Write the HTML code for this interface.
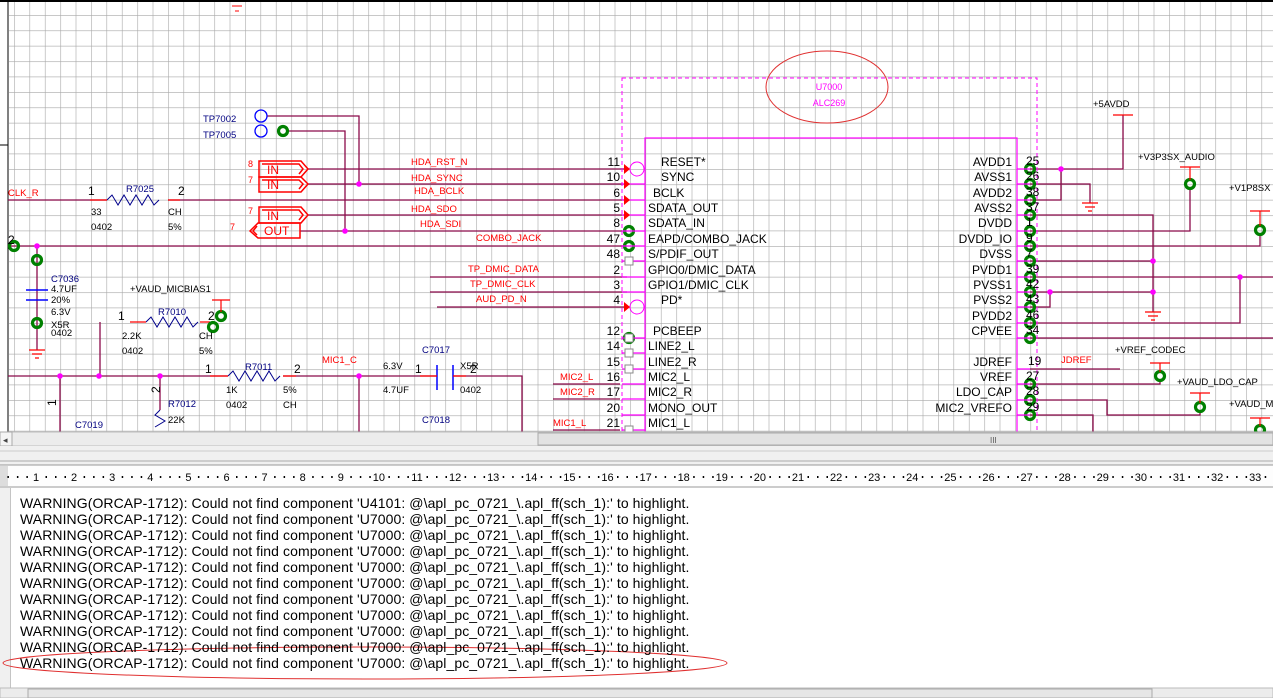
<!DOCTYPE html>
<html><head><meta charset="utf-8"><style>
html,body{margin:0;padding:0;width:1273px;height:698px;overflow:hidden;background:#fff;font-family:"Liberation Sans",Arial,sans-serif}
#sch{position:absolute;left:0;top:0}
.msg{position:absolute;left:20px;font-size:14px;color:#000;white-space:nowrap;line-height:16px;letter-spacing:0.08px}
</style></head><body>
<svg id="sch" width="1273" height="698" viewBox="0 0 1273 698" font-family="Liberation Sans, Arial, sans-serif">
<defs>
<pattern id="g" x="14.1" y="15" width="15.4" height="15.4" patternUnits="userSpaceOnUse">
<path d="M0 0V15.4M0 0H15.4" stroke="#a8a8a8" stroke-width="1.2" fill="none"/>
</pattern>
</defs>
<rect x="0" y="0" width="1273" height="432" fill="#fff"/>
<rect x="9" y="2" width="1264" height="430" fill="url(#g)"/>
<line x1="0" y1="1" x2="1273" y2="1" stroke="#000" stroke-width="2"/>
<line x1="8" y1="0" x2="8" y2="432" stroke="#000"/>
<line x1="0" y1="145" x2="8" y2="145" stroke="#000"/>
<g stroke="#f00"><line x1="232" y1="6" x2="242" y2="6"/><line x1="235" y1="11" x2="239" y2="11"/></g>

<g stroke="#8b0a4a" stroke-width="1.3" fill="none">
<path d="M267 116H359V184"/><path d="M289 131H345V231"/>
<path d="M308 169H627M308 184H627M8 200H107M168 200H627M308 215H627M300 231H627M8 246H627"/>
<path d="M430 277H627M430 292H627M437 307H627"/>
<path d="M37 246V350M100 322V376M8 376H228M283 376H437M453 376H522V432M60 376V432M359 376V432M160 376V410"/>
<path d="M1030 169H1123V115M1061 169V200H1030M1030 184H1090V203M1030 215H1153V312M1030 231H1190V190M1030 246H1260V236M1030 261H1153M1030 277H1273M1030 292H1153M1050 292V307H1030M1030 323H1240V277M1030 338H1273"/>
<path d="M1030 369H1120M1030 384H1160V382M1030 400H1107V415H1200V413M1030 415H1093V432"/>
<path d="M553 384H620M553 399H620M553 430H620"/>
</g>
<g fill="#f0f">
<circle cx="359" cy="184" r="2.8"/><circle cx="345" cy="231" r="2.8"/><circle cx="37" cy="246" r="2.8"/>
<circle cx="60" cy="376" r="2.8"/><circle cx="99" cy="376" r="2.8"/><circle cx="160" cy="376" r="2.8"/><circle cx="359" cy="376" r="2.8"/>
<circle cx="1061" cy="169" r="2.8"/><circle cx="1153" cy="261" r="2.8"/><circle cx="1153" cy="292" r="2.8"/><circle cx="1050" cy="292" r="2.8"/><circle cx="1240" cy="277" r="2.8"/>
</g>
<g stroke="#00008b" stroke-width="1" fill="none">
<path d="M107 200l5-5 6 10 6-10 6 10 6-10 6 10 6-10 6 10 5-5"/>
<path d="M146 322l5-5 6 10 6-10 6 10 6-10 6 10 6-10 6 10 5-5"/>
<path d="M228 376l5-5 6 10 6-10 6 10 6-10 6 10 6-10 6 10 5-5"/>
<path d="M160 410l-5 5 10 6-10 6"/>
<path d="M26 290H48M26 300H48M437 365V390M453 365V390" stroke="#00f" stroke-width="1.5"/>
</g>
<g stroke="#f00" stroke-width="1.3"><path d="M90 200H107M168 200H180M130 322H146M200 322H210M210 376H228M283 376H296M420 376H437M453 376H466"/></g>
<g fill="none" stroke="#00f" stroke-width="1.3"><circle cx="261" cy="116" r="6"/><circle cx="261" cy="131" r="6"/></g>
<g fill="none" stroke="#008000" stroke-width="3.2">
<circle cx="283" cy="131" r="4.5"/><circle cx="37" cy="260" r="4.5"/><circle cx="37" cy="323" r="4.5"/><circle cx="14" cy="246" r="4.5"/>
<circle cx="213" cy="327" r="4.5"/><circle cx="221" cy="316" r="4.5"/>
<circle cx="629" cy="231" r="4.5"/><circle cx="629" cy="246" r="4.5"/><circle cx="629" cy="338" r="4.5"/>
<circle cx="1030" cy="169" r="4.5"/><circle cx="1030" cy="184" r="4.5"/><circle cx="1030" cy="200" r="4.5"/><circle cx="1030" cy="215" r="4.5"/><circle cx="1030" cy="231" r="4.5"/><circle cx="1030" cy="246" r="4.5"/><circle cx="1030" cy="261" r="4.5"/><circle cx="1030" cy="277" r="4.5"/><circle cx="1030" cy="292" r="4.5"/><circle cx="1030" cy="307" r="4.5"/><circle cx="1030" cy="323" r="4.5"/><circle cx="1030" cy="338" r="4.5"/>
<circle cx="1030" cy="384" r="4.5"/><circle cx="1030" cy="400" r="4.5"/><circle cx="1030" cy="415" r="4.5"/>
<circle cx="1190" cy="184" r="4.5"/><circle cx="1260" cy="230" r="4.5"/><circle cx="1160" cy="376" r="4.5"/><circle cx="1200" cy="407" r="4.5"/><circle cx="1260" cy="430" r="4.5"/>
</g>
<g stroke="#f00" stroke-width="1.2">
<path d="M1113 115H1133M1180 167H1200M1250 211H1270M1150 363H1170M1190 393H1210M1250 418H1270M212 300H230M221 300V312"/>
<path d="M1190 167V180M1260 211V226M1160 363V372M1200 393V403M1260 418V426"/>
<path d="M1082 203H1098M1085 207H1095M1088 211H1092M1145 312H1161M1148 316H1158M1151 320H1155M29 350H45M32 354H42M35 358H39"/>
</g>
<g stroke="#f00" stroke-width="1.5" fill="none">
<path d="M259 161H301L308 169L301 177H259Z"/><path d="M262 164H299L303 169L299 174"/>
<path d="M259 177H301L308 184L301 192H259Z"/><path d="M262 180H299L303 184L299 189"/>
<path d="M259 207H301L308 215L301 223H259Z"/><path d="M262 210H299L303 215L299 220"/>
<path d="M300 223H258L250 231L258 238H300Z"/><path d="M257 226L253 231L257 235"/>
</g>
<g fill="#f00" font-size="12"><text x="267" y="174">IN</text><text x="267" y="189">IN</text><text x="267" y="220">IN</text><text x="264" y="235">OUT</text>
<g font-size="9"><text x="248" y="167">8</text><text x="248" y="183">7</text><text x="248" y="214">7</text><text x="230" y="230">7</text></g></g>

<rect x="622" y="78" width="415" height="360" fill="none" stroke="#f0f" stroke-dasharray="4,3"/>
<rect x="645" y="138" width="372" height="300" fill="none" stroke="#f0f" stroke-width="1.2"/>
<ellipse cx="827" cy="87" rx="61" ry="36" fill="none" stroke="#e03030"/>
<g fill="#f0f" font-size="9" text-anchor="middle"><text x="829" y="90">U7000</text><text x="829" y="106">ALC269</text></g>
<g stroke="#f0f" stroke-width="1.2"><path d="M622 184H645M622 200H645M622 215H645M622 231H645M622 246H645M622 261H645M622 277H645M622 292H645M622 338H645M622 353H645M622 369H645M622 384H645M622 399H645M622 415H645M622 430H645"/>
<path d="M1017 169H1030M1017 184H1030M1017 200H1030M1017 215H1030M1017 231H1030M1017 246H1030M1017 261H1030M1017 277H1030M1017 292H1030M1017 307H1030M1017 323H1030M1017 338H1030M1017 369H1030M1017 384H1030M1017 400H1030M1017 415H1030"/></g>
<g fill="none" stroke="#f0f"><circle cx="637" cy="169" r="7"/><circle cx="637" cy="307" r="7"/></g>
<g fill="#f00"><path d="M624 164l6 5-6 5z"/><path d="M624 179l6 5-6 5z"/><path d="M624 195l6 5-6 5z"/><path d="M624 210l6 5-6 5z"/><path d="M624 302l6 5-6 5z"/></g>
<g fill="#fff" stroke="#888"><rect x="625" y="257" width="8" height="8"/><rect x="625" y="334" width="8" height="8"/><rect x="625" y="349" width="8" height="8"/><rect x="625" y="365" width="8" height="8"/><rect x="625" y="426" width="8" height="8"/></g>
<g font-size="12" fill="#000">
<g text-anchor="end"><text x="620" y="166">11</text><text x="620" y="181">10</text><text x="620" y="197">6</text><text x="620" y="212">5</text><text x="620" y="227">8</text><text x="620" y="243">47</text><text x="620" y="258">48</text><text x="620" y="274">2</text><text x="620" y="289">3</text><text x="620" y="304">4</text><text x="620" y="335">12</text><text x="620" y="350">14</text><text x="620" y="366">15</text><text x="620" y="381">16</text><text x="620" y="396">17</text><text x="620" y="412">20</text><text x="620" y="427">21</text></g>
<text x="661" y="166">RESET*</text><text x="661" y="181">SYNC</text><text x="653" y="197">BCLK</text><text x="648" y="212">SDATA_OUT</text><text x="648" y="227">SDATA_IN</text><text x="648" y="243">EAPD/COMBO_JACK</text><text x="648" y="258">S/PDIF_OUT</text><text x="648" y="274">GPIO0/DMIC_DATA</text><text x="648" y="289">GPIO1/DMIC_CLK</text><text x="661" y="304">PD*</text><text x="653" y="335">PCBEEP</text><text x="648" y="350">LINE2_L</text><text x="648" y="366">LINE2_R</text><text x="648" y="381">MIC2_L</text><text x="648" y="396">MIC2_R</text><text x="648" y="412">MONO_OUT</text><text x="648" y="427">MIC1_L</text>
<g text-anchor="end"><text x="1012" y="166">AVDD1</text><text x="1012" y="181">AVSS1</text><text x="1012" y="197">AVDD2</text><text x="1012" y="212">AVSS2</text><text x="1012" y="227">DVDD</text><text x="1012" y="243">DVDD_IO</text><text x="1012" y="258">DVSS</text><text x="1012" y="274">PVDD1</text><text x="1012" y="289">PVSS1</text><text x="1012" y="304">PVSS2</text><text x="1012" y="320">PVDD2</text><text x="1012" y="335">CPVEE</text><text x="1012" y="366">JDREF</text><text x="1012" y="381">VREF</text><text x="1012" y="396">LDO_CAP</text><text x="1012" y="412">MIC2_VREFO</text></g>
<text x="1026" y="165">25</text><text x="1026" y="180">26</text><text x="1026" y="196">38</text><text x="1026" y="211">37</text><text x="1026" y="226">1</text><text x="1026" y="242">9</text><text x="1026" y="257">7</text><text x="1026" y="273">39</text><text x="1026" y="288">42</text><text x="1026" y="303">43</text><text x="1026" y="319">46</text><text x="1026" y="334">34</text><text x="1028" y="365">19</text><text x="1026" y="380">27</text><text x="1026" y="395">28</text><text x="1026" y="411">29</text>
</g>
<g fill="#f00" font-size="9.5">
<text x="411" y="165">HDA_RST_N</text><text x="411" y="181">HDA_SYNC</text><text x="414" y="194">HDA_BCLK</text><text x="411" y="212">HDA_SDO</text><text x="420" y="227">HDA_SDI</text><text x="476" y="241">COMBO_JACK</text>
<text x="468" y="272">TP_DMIC_DATA</text><text x="470" y="287">TP_DMIC_CLK</text><text x="476" y="302">AUD_PD_N</text>
<text x="560" y="380">MIC2_L</text><text x="560" y="395">MIC2_R</text><text x="553" y="426">MIC1_L</text>
<text x="8" y="196">CLK_R</text><text x="322" y="363">MIC1_C</text><text x="1061" y="363">JDREF</text>
</g>
<g fill="#000080" font-size="9.5"><text x="203" y="122">TP7002</text><text x="203" y="138">TP7005</text><text x="126" y="192">R7025</text><text x="51" y="282">C7036</text><text x="158" y="315">R7010</text><text x="245" y="370">R7011</text><text x="422" y="353">C7017</text><text x="168" y="407">R7012</text><text x="422" y="423">C7018</text><text x="75" y="428">C7019</text></g>
<g fill="#000" font-size="9.5">
<text x="91" y="215">33</text><text x="168" y="215">CH</text><text x="91" y="230">0402</text><text x="168" y="230">5%</text>
<text x="51" y="292">4.7UF</text><text x="51" y="303">20%</text><text x="51" y="315">6.3V</text><text x="51" y="328">X5R</text><text x="51" y="336">0402</text>
<text x="130" y="292">+VAUD_MICBIAS1</text><text x="122" y="339">2.2K</text><text x="199" y="339">CH</text><text x="122" y="354">0402</text><text x="199" y="354">5%</text>
<text x="226" y="393">1K</text><text x="226" y="408">0402</text><text x="283" y="393">5%</text><text x="283" y="408">CH</text>
<text x="383" y="369">6.3V</text><text x="460" y="369">X5R</text><text x="383" y="393">4.7UF</text><text x="460" y="393">0402</text><text x="168" y="423">22K</text>
<text x="1093" y="107">+5AVDD</text><text x="1138" y="160">+V3P3SX_AUDIO</text><text x="1229" y="191">+V1P8SX</text><text x="1115" y="353">+VREF_CODEC</text><text x="1177" y="385">+VAUD_LDO_CAP</text><text x="1229" y="407">+VAUD_M</text>
</g>
<g fill="#000" font-size="12"><text x="88" y="195">1</text><text x="178" y="195">2</text><text x="118" y="320">1</text><text x="208" y="320">2</text><text x="205" y="373">1</text><text x="294" y="373">2</text><text x="415" y="373">1</text><text x="470" y="373">2</text><text x="8" y="244">2</text>
<text x="155" y="398" transform="rotate(-90 155 393)">2</text><text x="52" y="410" transform="rotate(-90 52 406)">1</text></g>

<rect x="0" y="432" width="1273" height="14" fill="#ececec" stroke="#bbb"/>
<rect x="0" y="432" width="12" height="14" fill="#f4f4f4" stroke="#aaa"/>
<text x="3" y="443" font-size="9" fill="#444">◂</text>
<rect x="538" y="433" width="735" height="12" fill="#e2e2e2" stroke="#aaa"/>
<text x="990" y="443" font-size="8" fill="#555">III</text>
<rect x="0" y="446" width="1273" height="20" fill="#f0f0f0"/>
<line x1="0" y1="451" x2="1273" y2="451" stroke="#ccc"/><line x1="0" y1="461" x2="1273" y2="461" stroke="#aaa"/>
<rect x="0" y="465" width="1273" height="23" fill="#fdfdfd"/>
<line x1="0" y1="465" x2="1273" y2="465" stroke="#999"/><line x1="0" y1="487" x2="1273" y2="487" stroke="#999"/>
<rect x="0" y="466" width="8" height="20" fill="#ddd"/>
<g id="ruler" font-size="11" fill="#000" text-anchor="middle"></g>
<rect x="10" y="488" width="1263" height="200" fill="#fff"/>
<line x1="10" y1="488" x2="10" y2="688" stroke="#888"/>
<rect x="0" y="488" width="10" height="210" fill="#f0f0f0"/>
<rect x="0" y="688" width="1273" height="10" fill="#ececec" stroke="#bbb"/>
<rect x="28" y="689" width="1124" height="9" fill="#e6e6e6" stroke="#aaa"/>
<ellipse cx="365" cy="663" rx="362" ry="16" fill="none" stroke="#e03030"/>
</svg>
<div class="msg" style="top:495px">WARNING(ORCAP-1712): Could not find component 'U4101: @\apl_pc_0721_\.apl_ff(sch_1):' to highlight.<br>
WARNING(ORCAP-1712): Could not find component 'U7000: @\apl_pc_0721_\.apl_ff(sch_1):' to highlight.<br>
WARNING(ORCAP-1712): Could not find component 'U7000: @\apl_pc_0721_\.apl_ff(sch_1):' to highlight.<br>
WARNING(ORCAP-1712): Could not find component 'U7000: @\apl_pc_0721_\.apl_ff(sch_1):' to highlight.<br>
WARNING(ORCAP-1712): Could not find component 'U7000: @\apl_pc_0721_\.apl_ff(sch_1):' to highlight.<br>
WARNING(ORCAP-1712): Could not find component 'U7000: @\apl_pc_0721_\.apl_ff(sch_1):' to highlight.<br>
WARNING(ORCAP-1712): Could not find component 'U7000: @\apl_pc_0721_\.apl_ff(sch_1):' to highlight.<br>
WARNING(ORCAP-1712): Could not find component 'U7000: @\apl_pc_0721_\.apl_ff(sch_1):' to highlight.<br>
WARNING(ORCAP-1712): Could not find component 'U7000: @\apl_pc_0721_\.apl_ff(sch_1):' to highlight.<br>
WARNING(ORCAP-1712): Could not find component 'U7000: @\apl_pc_0721_\.apl_ff(sch_1):' to highlight.<br>
WARNING(ORCAP-1712): Could not find component 'U7000: @\apl_pc_0721_\.apl_ff(sch_1):' to highlight.</div>
<script>
var g=document.getElementById('ruler'),s='';
for(var n=0;n<=33;n++){var x=36+(n-1)*38.1;if(n>0)s+='<text x="'+x+'" y="481">'+n+'</text>';
for(var k=1;k<=3;k++){var d=x+k*9.5;if(d<1273)s+='<rect x="'+d+'" y="476" width="1.5" height="2" fill="#000"/>';}}
g.innerHTML=s;
</script>
</body></html>
